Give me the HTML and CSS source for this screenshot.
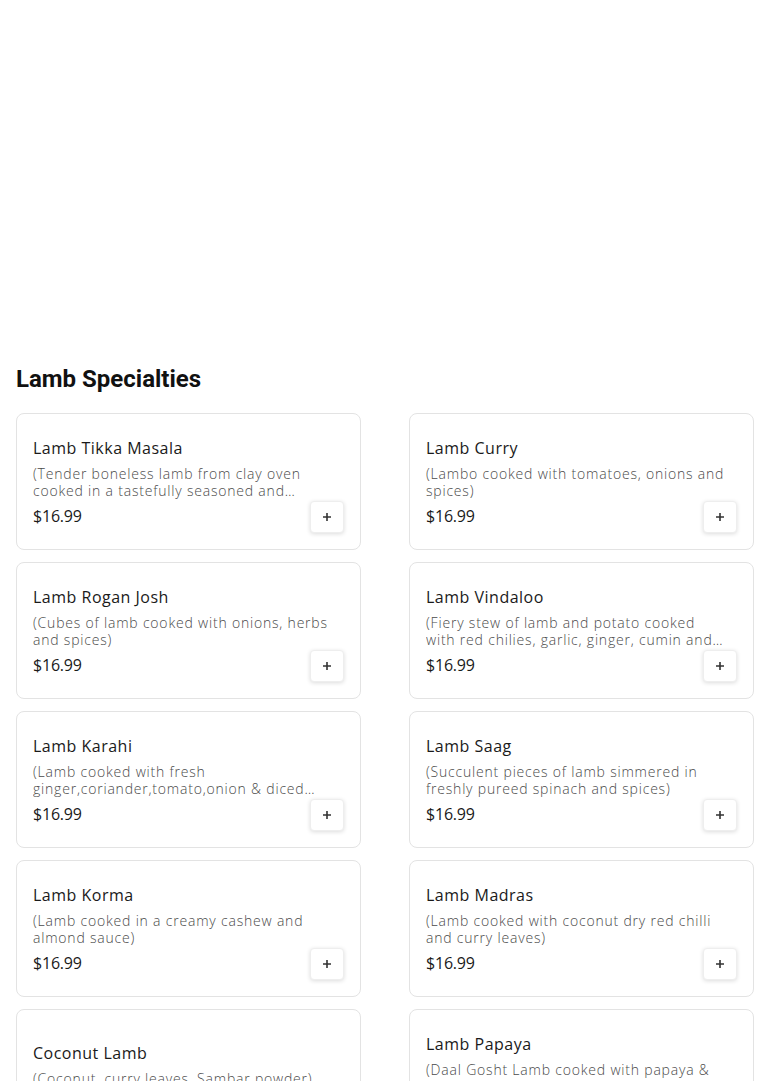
FILE: index.html
```html
<!DOCTYPE html>
<html lang="en">
<head>
<meta charset="utf-8">
<title>Lamb Specialties</title>
<link rel="stylesheet" href="styles.css">
</head>
<body>
<div class="hero"></div>
<section class="category">
  <h2 class="category-title">Lamb Specialties</h2>
  <div class="grid">
    <div class="card">
      <h3 class="item-name">Lamb Tikka Masala</h3>
      <p class="item-desc">(Tender boneless lamb from clay oven cooked in a tastefully seasoned and flavorful creamy sauce)</p>
      <div class="item-foot"><span class="price">$16.99</span><button class="add" aria-label="Add"><svg viewBox="0 0 10 10" width="10" height="10"><path d="M5 1v8M1 5h8" stroke="#333" stroke-width="1.6" fill="none"/></svg></button></div>
    </div>
    <div class="card">
      <h3 class="item-name">Lamb Curry</h3>
      <p class="item-desc">(Lambo cooked with tomatoes, onions and spices)</p>
      <div class="item-foot"><span class="price">$16.99</span><button class="add" aria-label="Add"><svg viewBox="0 0 10 10" width="10" height="10"><path d="M5 1v8M1 5h8" stroke="#333" stroke-width="1.6" fill="none"/></svg></button></div>
    </div>
    <div class="card">
      <h3 class="item-name">Lamb Rogan Josh</h3>
      <p class="item-desc">(Cubes of lamb cooked with onions, herbs and spices)</p>
      <div class="item-foot"><span class="price">$16.99</span><button class="add" aria-label="Add"><svg viewBox="0 0 10 10" width="10" height="10"><path d="M5 1v8M1 5h8" stroke="#333" stroke-width="1.6" fill="none"/></svg></button></div>
    </div>
    <div class="card">
      <h3 class="item-name">Lamb Vindaloo</h3>
      <p class="item-desc">(Fiery stew of lamb and potato cooked with red chilies, garlic, ginger, cumin and vinegar)</p>
      <div class="item-foot"><span class="price">$16.99</span><button class="add" aria-label="Add"><svg viewBox="0 0 10 10" width="10" height="10"><path d="M5 1v8M1 5h8" stroke="#333" stroke-width="1.6" fill="none"/></svg></button></div>
    </div>
    <div class="card">
      <h3 class="item-name">Lamb Karahi</h3>
      <p class="item-desc">(Lamb cooked with fresh ginger,coriander,tomato,onion &amp; diced green peppers)</p>
      <div class="item-foot"><span class="price">$16.99</span><button class="add" aria-label="Add"><svg viewBox="0 0 10 10" width="10" height="10"><path d="M5 1v8M1 5h8" stroke="#333" stroke-width="1.6" fill="none"/></svg></button></div>
    </div>
    <div class="card">
      <h3 class="item-name">Lamb Saag</h3>
      <p class="item-desc">(Succulent pieces of lamb simmered in freshly pureed spinach and spices)</p>
      <div class="item-foot"><span class="price">$16.99</span><button class="add" aria-label="Add"><svg viewBox="0 0 10 10" width="10" height="10"><path d="M5 1v8M1 5h8" stroke="#333" stroke-width="1.6" fill="none"/></svg></button></div>
    </div>
    <div class="card">
      <h3 class="item-name">Lamb Korma</h3>
      <p class="item-desc">(Lamb cooked in a creamy cashew and almond sauce)</p>
      <div class="item-foot"><span class="price">$16.99</span><button class="add" aria-label="Add"><svg viewBox="0 0 10 10" width="10" height="10"><path d="M5 1v8M1 5h8" stroke="#333" stroke-width="1.6" fill="none"/></svg></button></div>
    </div>
    <div class="card">
      <h3 class="item-name">Lamb Madras</h3>
      <p class="item-desc">(Lamb cooked with coconut dry red chilli and curry leaves)</p>
      <div class="item-foot"><span class="price">$16.99</span><button class="add" aria-label="Add"><svg viewBox="0 0 10 10" width="10" height="10"><path d="M5 1v8M1 5h8" stroke="#333" stroke-width="1.6" fill="none"/></svg></button></div>
    </div>
    <div class="card">
      <h3 class="item-name">Coconut Lamb</h3>
      <p class="item-desc">(Coconut, curry leaves, Sambar powder)</p>
      <div class="item-foot"><span class="price">$16.99</span><button class="add" aria-label="Add"><svg viewBox="0 0 10 10" width="10" height="10"><path d="M5 1v8M1 5h8" stroke="#333" stroke-width="1.6" fill="none"/></svg></button></div>
    </div>
    <div class="card">
      <h3 class="item-name">Lamb Papaya</h3>
      <p class="item-desc">(Daal Gosht Lamb cooked with papaya &amp; lentils in a spiced gravy)</p>
      <div class="item-foot"><span class="price">$16.99</span><button class="add" aria-label="Add"><svg viewBox="0 0 10 10" width="10" height="10"><path d="M5 1v8M1 5h8" stroke="#333" stroke-width="1.6" fill="none"/></svg></button></div>
    </div>
  </div>
</section>
</body>
</html>
```

FILE: styles.css
```css
* { box-sizing: border-box; }
body {
  margin: 0;
  background: #fff;
  font-family: "Open Sans", "DejaVu Sans", sans-serif;
  color: #1c1c1c;
}
.hero { height: 363px; }
.category { padding: 0 16px 40px; }
.category-title {
  margin: 0 0 18px;
  font-family: Roboto, "Liberation Sans", sans-serif;
  font-weight: 700;
  font-size: 24px;
  line-height: 32px;
  color: #111;
}
.grid {
  display: grid;
  grid-template-columns: 1fr 1fr;
  column-gap: 48px;
  row-gap: 12px;
}
.card {
  min-height: 137px;
  border: 1px solid #e3e3e3;
  border-radius: 8px;
  padding: 22px 16px 16px;
  display: flex;
  flex-direction: column;
  justify-content: center;
}
.item-name {
  margin: 0 0 5px;
  font-size: 16px;
  line-height: 24px;
  font-weight: 500;
  letter-spacing: 0.5px;
  color: #1a1a1a;
}
.item-desc {
  margin: 0 0 2px;
  padding-right: 10px;
  font-size: 14px;
  line-height: 17px;
  font-weight: 300;
  letter-spacing: 0.8px;
  color: #4a4a4a;
  display: -webkit-box;
  -webkit-line-clamp: 2;
  -webkit-box-orient: vertical;
  overflow: hidden;
}
.item-foot {
  display: flex;
  align-items: center;
  justify-content: space-between;
  height: 32px;
}
.price {
  font-size: 16px;
  line-height: 24px;
  letter-spacing: -0.2px;
  color: #1a1a1a;
  align-self: flex-start;
  margin-top: 3px;
}
.add {
  width: 34px;
  height: 32px;
  border: 1px solid #eeeeee;
  border-radius: 4px;
  background: #fff;
  box-shadow: 0 1px 4px rgba(0,0,0,0.14);
  display: flex;
  align-items: center;
  justify-content: center;
  padding: 0;
}
```
